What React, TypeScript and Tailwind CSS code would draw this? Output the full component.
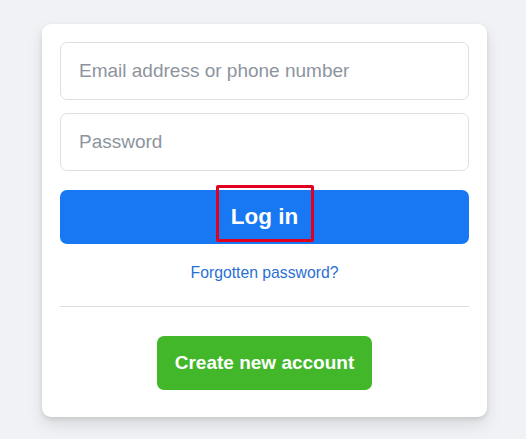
import React from "react";

export default function App() {
  return (
    <div
      className="w-[526px] h-[439px] bg-[#f0f2f5] pt-[24px] pl-[42px]"
      style={{ fontFamily: '"Liberation Sans", Arial, Helvetica, sans-serif' }}
    >
      <div className="w-[445px] bg-white rounded-[9px] shadow-[0_2px_4px_rgba(0,0,0,0.1),0_8px_16px_rgba(0,0,0,0.1)] px-[18px] pt-[18px] pb-[27px] flex flex-col">
        <input
          className="h-[58px] w-full border border-[#dddfe2] rounded-[7px] px-[18px] text-[19px] text-[#1c1e21] placeholder:text-[#8d949e] outline-none"
          placeholder="Email address or phone number"
        />
        <input
          type="password"
          className="mt-[13px] h-[58px] w-full border border-[#dddfe2] rounded-[7px] px-[18px] text-[19px] text-[#1c1e21] placeholder:text-[#8d949e] outline-none"
          placeholder="Password"
        />
        <button className="relative mt-[19px] h-[54px] w-full bg-[#1877f2] rounded-[7px] text-white text-[22.5px] font-bold flex items-center justify-center">
          Log in
          <span className="absolute left-[156px] top-[-5px] w-[98px] h-[57px] border-[3px] border-[#e2001f] rounded-[2px]" />
        </button>
        <div className="mt-[17px] text-center">
          <a className="text-[15.75px] text-[#2a6fd6] leading-[20px]">Forgotten password?</a>
        </div>
        <div className="mt-[21px] border-b border-[#dadde1]" />
        <div className="mt-[29px] flex justify-center">
          <button className="h-[54px] px-[18px] bg-[#42b72a] rounded-[7px] text-white text-[19px] font-bold">
            Create new account
          </button>
        </div>
      </div>
    </div>
  );
}
